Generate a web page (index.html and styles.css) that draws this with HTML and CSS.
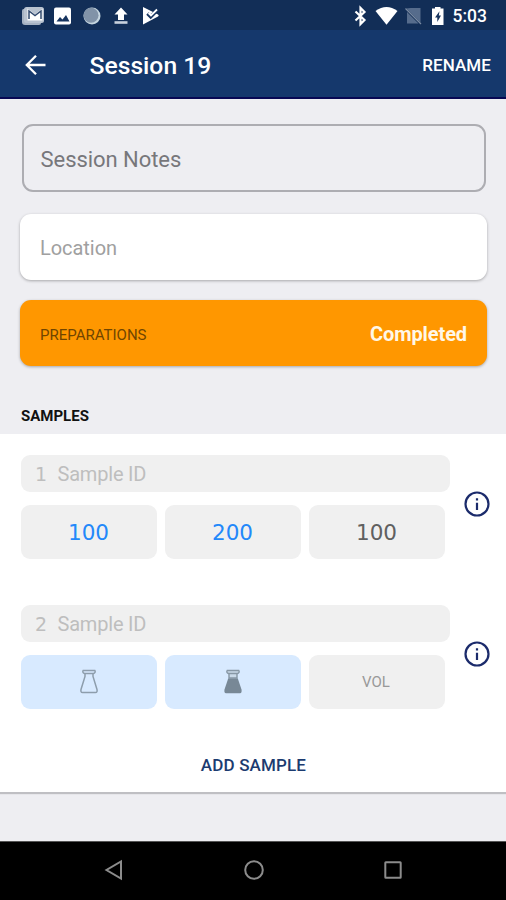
FILE: index.html
```html
<!DOCTYPE html>
<html lang="en">
<head>
<meta charset="utf-8">
<title>Session 19</title>
<link rel="stylesheet" href="styles.css">
</head>
<body>
<div class="screen">
  <div class="status">
    <svg class="status-left" width="170" height="30" viewBox="0 0 170 30">
      <path d="M25 9h-1.500q-1.500 0-1.500 2v11q0 3 3 3h14q2 0 2-2" fill="#a7b3c3"/>
      <rect x="24" y="7" width="20" height="16" rx="2.500" fill="#b9c3d0"/>
      <path d="M28.500 19.500v-9l6.500 5 6.500-5v9z" fill="#fff" stroke="#fff" stroke-width="2"/>
      <path d="M29 19v-8l6 4.500 6-4.500v8" fill="none" stroke="#31496e" stroke-width="1.500"/>
      <rect x="54" y="7.500" width="17" height="17" rx="2" fill="#fff"/>
      <path d="M56.500 21.500l3.500-4.500 2.500 2.500 3.500-4.500 3.500 6.500z" fill="#17345f"/>
      <circle cx="92" cy="16" r="8.500" fill="#c5d5df"/>
      <circle cx="91" cy="15.300" r="7.500" fill="#8193a8"/>
      <path d="M121 7.500l6.500 7h-3.500v5.500h-6v-5.500h-3.500z" fill="#fff"/>
      <rect x="114.500" y="21.200" width="13" height="2.600" fill="#c9d1dc"/>
      <path d="M143 7l15 7.500q1.500 1 0 2L143 24.500z" fill="#fff"/>
      <path d="M147.500 13.500l3.200 3.200 7.500-7.500" fill="none" stroke="#17345f" stroke-width="3.500"/>
      <path d="M148.500 13l2.500 2.500 6-6" fill="none" stroke="#fff" stroke-width="1.800"/>
    </svg>
    <svg class="status-right" width="100" height="30" viewBox="350 0 100 30">
      <path d="M355.500 11.500l9 8.500-4 4V8l4 4-9 8.500" fill="none" stroke="#fff" stroke-width="2.200"/>
      <path d="M375.500 11q11-8 22 0L386.500 24.700z" fill="#fff"/>
      <path d="M410.500 8h10v14.500l-14-14zM407 12l11.500 11.500H407z" fill="#566c8c"/>
      <path d="M405.500 8.500l15.500 15.500" stroke="#7889a2" stroke-width="1.300"/>
      <path d="M435 7h5.500v1.500h3V25H432V8.500h3z" fill="#fff"/>
      <path d="M439.500 11.200l-4.500 6.300h2.300v4.500l3.700-6.500h-2.200z" fill="#17345f"/>
    </svg>
    <span class="clock">5:03</span>
  </div>
  <header class="appbar">
    <svg width="22" height="22" viewBox="0 0 22 22"><path d="M20.500 11H2.500M11 1.800L1.800 11l9.200 9.200" fill="none" stroke="#fff" stroke-width="2.300"/></svg>
    <h1>Session 19</h1>
    <span class="rename">RENAME</span>
  </header>
  <main>
    <div class="field notes">Session Notes</div>
    <div class="field location">Location</div>
    <div class="field prep"><span class="prep-label">PREPARATIONS</span><strong>Completed</strong></div>
    <h2>SAMPLES</h2>
    <section class="samples">
      <div class="sample">
        <div class="entry">
          <div class="sample-id"><span class="index">1</span><span>Sample ID</span></div>
          <div class="values"><div class="value blue">100</div><div class="value blue">200</div><div class="value">100</div></div>
        </div>
        <svg class="info" width="26" height="26" viewBox="0 0 26 26"><circle cx="13" cy="13" r="11.500"/><path d="M13 11.800v7.200M13 7.200v2.300"/></svg>
      </div>
      <div class="sample">
        <div class="entry">
          <div class="sample-id"><span class="index">2</span><span>Sample ID</span></div>
          <div class="values">
            <div class="value light"><svg width="20" height="26" viewBox="0 0 20 26"><path d="M4.200 1.500h11.600q1.200 2-1.300 3h-9q-2.500-1-1.300-3zM6 5v2.500L2 20.500q-.6 3 1.500 3h13q2.100 0 1.500-3L14 7.500V5" fill="none" stroke="#8d9dac" stroke-width="1.500"/></svg></div>
            <div class="value light"><svg width="20" height="26" viewBox="0 0 20 26"><path d="M4.200 1.500h11.600q1.200 2-1.300 3h-9q-2.500-1-1.300-3zM6 5v4h8V5" fill="#c9d9e8" stroke="#8797a5" stroke-width="1.400"/><path d="M5.200 9.500h9.600l3.700 11q.6 3.800-1.500 3.800H3q-2.100 0-1.500-3.800z" fill="#788896"/></svg></div>
            <div class="value vol">VOL</div>
          </div>
        </div>
        <svg class="info" width="26" height="26" viewBox="0 0 26 26"><circle cx="13" cy="13" r="11.500"/><path d="M13 11.800v7.200M13 7.200v2.300"/></svg>
      </div>
      <div class="add">ADD SAMPLE</div>
    </section>
  </main>
  <nav>
    <svg width="20" height="22" viewBox="0 0 20 22"><path d="M17 2.500v17L2.500 11z"/></svg>
    <svg width="22" height="22" viewBox="0 0 22 22"><circle cx="11" cy="11" r="8.800"/></svg>
    <svg width="20" height="20" viewBox="0 0 20 20"><rect x="2.300" y="2.300" width="15.400" height="15.400" rx=".5"/></svg>
  </nav>
</div>
</body>
</html>
```
FILE: styles.css
```css
* { box-sizing: border-box; }
body { margin: 0; font-family: Roboto, sans-serif; }
svg { display: block; flex: none; }
h1, h2 { margin: 0; }
.screen { width: 506px; height: 900px; display: flex; flex-direction: column; background: #eeeef2; overflow: hidden; }
.status { height: 30px; flex: none; display: flex; background: #122e57; color: #fff; }
.status-right { margin-left: 180px; }
.clock { margin-left: 2.500px; font-size: 17.500px; font-weight: 500; line-height: 33px; }
.appbar { height: 69px; flex: none; display: flex; align-items: center; padding: 3px 15px 0 25px; background: #15386c; color: #fff; border-bottom: 2px solid #080853; }
.appbar h1 { margin-left: 42.500px; font-size: 24.700px; font-weight: 500; line-height: 30px; padding-top: 2px; }
.rename { margin-left: auto; font-size: 17px; font-weight: 500; letter-spacing: .1px; }
main { flex: 1; padding-top: 25px; }
.field { height: 66px; margin: 0 19px 20px 20px; padding: 0 20px; border-radius: 11px; display: flex; align-items: center; }
.notes { height: 68px; margin: 0 20px 22px 22px; padding: 3px 17px 0 16.500px; border: 2px solid #adadb2; color: #77777b; font-size: 22px; letter-spacing: -.05px; }
.location { background: #fff; color: #a0a0a0; font-size: 20px; padding-top: 2px; letter-spacing: -.05px; box-shadow: 0 1px 3px #0000004d; }
.prep { background: #ff9700; justify-content: space-between; margin-bottom: 0; padding-top: 2px; box-shadow: 0 1px 3px #0000004d; }
.prep-label { color: #704500; font-size: 15px; padding-top: 2px; }
.prep strong { color: #fff7e8; font-size: 20px; font-weight: 700; letter-spacing: -.1px; }
h2 { height: 68px; padding: 40px 0 0 21px; font-size: 15px; line-height: 20px; font-weight: 700; color: #111; }
.samples { height: 358px; padding: 21px 16px 0 21px; background: #fff; box-shadow: 0 2px 1px #bfbfc3; }
.sample { height: 104px; display: flex; justify-content: space-between; margin-bottom: 46px; }
.entry { width: 429px; }
.sample-id { height: 37px; display: flex; align-items: center; padding: 1px 0 0 14px; background: #f0f0f0; border-radius: 9px; color: #bebebe; font-size: 20px; letter-spacing: -.2px; }
.index { width: 22.500px; font-family: "DejaVu Sans", sans-serif; font-size: 19px; }
.values { width: 424px; display: grid; grid-template-columns: repeat(3, 1fr); gap: 8px; margin-top: 13px; }
.value { height: 54px; display: flex; align-items: center; justify-content: center; padding-right: 1px; background: #f0f0f0; border-radius: 9px; font-family: "DejaVu Sans", sans-serif; font-size: 21.500px; color: #606060; }
.blue { color: #2388fa; }
.light { background: #d8eaff; }
.vol { padding-right: 2px; font-family: Roboto, sans-serif; font-size: 15px; color: #999; }
.info { margin-top: 36px; fill: none; stroke: #1b2b6b; stroke-width: 2.200; }
.add { margin-top: -2px; padding-right: 4px; text-align: center; font-size: 17px; font-weight: 500; line-height: 24px; letter-spacing: .15px; color: #1c3b70; }
nav { height: 59px; flex: none; display: flex; align-items: center; justify-content: space-between; padding: 0 103px 2px 104px; background: #000; border-top: 1px solid #555; }
nav svg { fill: none; stroke: #8c8c8c; stroke-width: 2; }
```
